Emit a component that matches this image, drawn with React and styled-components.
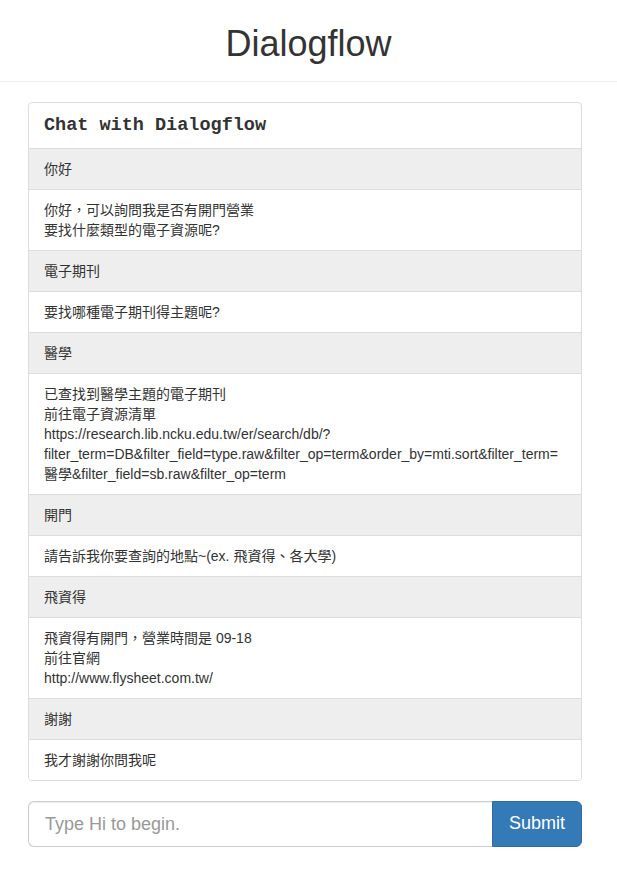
import React from "react";
import styled, { createGlobalStyle } from "styled-components";

const messages = [
  { from: "user", lines: ["你好"] },
  { from: "bot", lines: ["你好，可以詢問我是否有開門營業", "要找什麼類型的電子資源呢?"] },
  { from: "user", lines: ["電子期刊"] },
  { from: "bot", lines: ["要找哪種電子期刊得主題呢?"] },
  { from: "user", lines: ["醫學"] },
  {
    from: "bot",
    lines: [
      "已查找到醫學主題的電子期刊",
      "前往電子資源清單",
      "https://research.lib.ncku.edu.tw/er/search/db/?",
      "filter_term=DB&filter_field=type.raw&filter_op=term&order_by=mti.sort&filter_term=",
      "醫學&filter_field=sb.raw&filter_op=term",
    ],
  },
  { from: "user", lines: ["開門"] },
  { from: "bot", lines: ["請告訴我你要查詢的地點~(ex. 飛資得、各大學)"] },
  { from: "user", lines: ["飛資得"] },
  { from: "bot", lines: ["飛資得有開門，營業時間是 09-18", "前往官網", "http://www.flysheet.com.tw/"] },
  { from: "user", lines: ["謝謝"] },
  { from: "bot", lines: ["我才謝謝你問我呢"] },
];

const App = () => {
  return (
    <>
      <GlobalStyle />
      <Header>
        <Title>Dialogflow</Title>
      </Header>
      <Container>
        <Panel>
          <PanelHeading>Chat with Dialogflow</PanelHeading>
          {messages.map((m, i) => (
            <Item key={i} $user={m.from === "user"}>
              {m.lines.map((line, j) => (
                <Line key={j}>{line}</Line>
              ))}
            </Item>
          ))}
        </Panel>
        <Form onSubmit={(e) => e.preventDefault()}>
          <Input placeholder="Type Hi to begin." />
          <Button type="submit">Submit</Button>
        </Form>
      </Container>
    </>
  );
};

export default App;

const GlobalStyle = createGlobalStyle`
  * {
    box-sizing: border-box;
  }
  body {
    margin: 0;
    background: #fff;
    color: #333;
    font-family: "Liberation Sans", Arial, "Noto Sans CJK TC", sans-serif;
    font-size: 14px;
    line-height: 20px;
  }
`;

const Header = styled.header`
  padding: 24px 0 17px;
  border-bottom: 1px solid #eee;
  text-align: center;
`;

const Title = styled.h1`
  margin: 0;
  font-size: 36px;
  line-height: 40px;
  font-weight: 400;
  color: #333;
`;

const Container = styled.main`
  padding: 20px 35px 0 28px;
`;

const Panel = styled.section`
  border: 1px solid #ddd;
  border-radius: 4px;
  background: #fff;
  overflow: hidden;
  margin-bottom: 20px;
`;

const PanelHeading = styled.h3`
  margin: 0;
  padding: 10px 15px;
  font-family: "Liberation Mono", "Courier New", monospace;
  font-weight: 700;
  font-size: 18.5px;
  line-height: 25px;
  color: #333;
`;

const Item = styled.div`
  display: flex;
  flex-direction: column;
  padding: 10px 15px;
  border-top: 1px solid #ddd;
  background: ${(p) => (p.$user ? "#eee" : "#fff")};
  color: #333;
`;

const Line = styled.span`
  white-space: nowrap;
`;

const Form = styled.form`
  display: flex;
  height: 46px;
`;

const Input = styled.input`
  flex: 1;
  min-width: 0;
  height: 46px;
  padding: 10px 16px;
  font-family: "Liberation Sans", Arial, sans-serif;
  font-size: 18px;
  color: #555;
  border: 1px solid #ccc;
  border-right: 0;
  border-radius: 6px 0 0 6px;
  box-shadow: inset 0 1px 1px rgba(0, 0, 0, 0.075);
  outline: none;
  &::placeholder {
    color: #999;
  }
`;

const Button = styled.button`
  height: 46px;
  padding: 10px 16px;
  font-family: "Liberation Sans", Arial, sans-serif;
  font-size: 18px;
  line-height: 1.33;
  color: #fff;
  background: #337ab7;
  border: 1px solid #2e6da4;
  border-radius: 0 6px 6px 0;
  cursor: pointer;
`;
